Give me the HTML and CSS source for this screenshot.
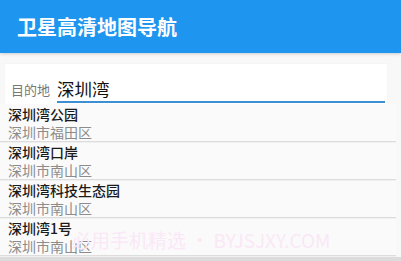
FILE: index.html
```html
<!DOCTYPE html>
<html lang="zh">
<head>
<meta charset="utf-8">
<link rel="stylesheet" href="styles.css">
</head>
<body>
<div class="app">
  <header class="bar"><h1 class="title">卫星高清地图导航</h1></header>
  <main class="main">
    <div class="card">
      <div class="field">
        <span class="label">目的地</span>
        <span class="input">深圳湾</span>
      </div>
      <ul class="dropdown">
        <li class="item"><div class="name">深圳湾公园</div><div class="addr">深圳市福田区</div></li>
        <li class="item"><div class="name">深圳湾口岸</div><div class="addr">深圳市南山区</div></li>
        <li class="item"><div class="name">深圳湾科技生态园</div><div class="addr">深圳市南山区</div></li>
        <li class="item"><div class="name">深圳湾1号</div><div class="addr">深圳市南山区</div></li>
      </ul>
    </div>
  </main>
  <div class="watermark">必用手机精选 • BYJSJXY.COM</div>
  <div class="navbar"></div>
</div>
</body>
</html>
```
FILE: styles.css
```css
html, body {
  margin: 0;
  padding: 0;
  width: 401px;
  height: 261px;
  overflow: hidden;
  background: #f8f8f8;
  font-family: "Noto Sans CJK SC", "Noto Sans", sans-serif;
}
.app {
  position: relative;
  width: 401px;
  height: 261px;
}
.bar {
  height: 53px;
  background: #1e95ee;
  padding-left: 17px;
  box-shadow: 0 1px 3px rgba(0,0,0,0.18);
  position: relative;
  z-index: 2;
}
.title {
  margin: 0;
  font-size: 20px;
  font-weight: 700;
  line-height: 53px;
  color: #ffffff;
}
.main {
  padding: 11px 14px 0 5px;
}
.card {
  position: relative;
  background: #ffffff;
  height: 51px;
  box-shadow: 0 0 1px rgba(0,0,0,0.08);
}
.field {
  display: flex;
  align-items: center;
  padding: 12px 2px 0 6px;
  height: 27px;
}
.label {
  font-size: 13px;
  color: #777777;
  width: 46px;
  line-height: 26px;
}
.input {
  flex: 1;
  font-size: 17.5px;
  color: #111111;
  line-height: 25px;
  border-bottom: 2px solid #3b8fd2;
  height: 25px;
}
.dropdown {
  position: absolute;
  top: 40px;
  left: -5px;
  width: 396px;
  margin: 0;
  padding: 0;
  list-style: none;
  background: #fafafa;
  z-index: 1;
}
.item {
  padding: 2px 0 0 8px;
  height: 35px;
  border-bottom: 1px solid #dddddd;
  box-shadow: 0 1px 0 #f0f0f0;
}
.name {
  font-size: 14px;
  line-height: 17px;
  color: #1a1a1a;
  font-weight: 500;
}
.addr {
  font-size: 14px;
  line-height: 18px;
  color: #8c8c8c;
}
.watermark {
  position: absolute;
  left: 72px;
  top: 228px;
  font-size: 19px;
  line-height: 24px;
  color: #fbe8f7;
  z-index: 3;
  white-space: nowrap;
}
.navbar {
  position: absolute;
  left: 0;
  top: 257px;
  width: 401px;
  height: 4px;
  background: #dcdcdc;
  z-index: 4;
}
```
